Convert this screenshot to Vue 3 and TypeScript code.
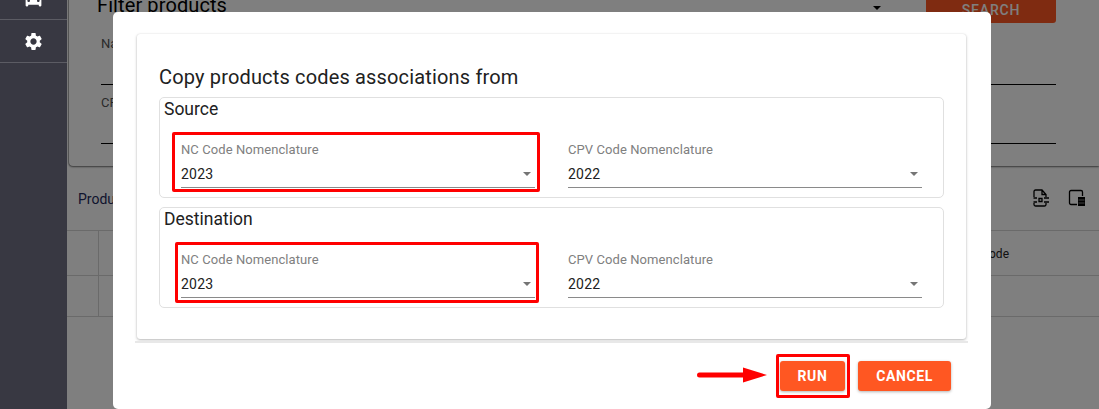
<script setup lang="ts">
interface Field { label: string; value: string }
interface Group { title: string; fields: Field[] }
const groups: Group[] = [
  { title: 'Source', fields: [{ label: 'NC Code Nomenclature', value: '2023' }, { label: 'CPV Code Nomenclature', value: '2022' }] },
  { title: 'Destination', fields: [{ label: 'NC Code Nomenclature', value: '2023' }, { label: 'CPV Code Nomenclature', value: '2022' }] },
]
</script>

<template>
  <div class="page">
    <aside class="sidebar">
      <div class="nav-item">
        <svg viewBox="0 0 24 24" class="nav-icon"><path d="M18.92 6.01C18.72 5.42 18.16 5 17.5 5h-11c-.66 0-1.21.42-1.42 1.01L3 12v8c0 .55.45 1 1 1h1c.55 0 1-.45 1-1v-1h12v1c0 .55.45 1 1 1h1c.55 0 1-.45 1-1v-8l-2.08-5.99zM6.5 16c-.83 0-1.5-.67-1.5-1.5S5.67 13 6.5 13s1.5.67 1.5 1.5S7.33 16 6.5 16zm11 0c-.83 0-1.5-.67-1.5-1.5s.67-1.5 1.5-1.5 1.5.67 1.5 1.5-.67 1.5-1.5 1.5zM5 11l1.5-4.5h11L19 11H5z"/></svg>
      </div>
      <div class="nav-item">
        <svg viewBox="0 0 24 24" class="nav-icon"><path d="M19.14 12.94c.04-.3.06-.61.06-.94 0-.32-.02-.64-.07-.94l2.03-1.58c.18-.14.23-.41.12-.61l-1.92-3.32c-.12-.22-.37-.29-.59-.22l-2.39.96c-.5-.38-1.03-.7-1.62-.94l-.36-2.54c-.04-.24-.24-.41-.48-.41h-3.84c-.24 0-.43.17-.47.41l-.36 2.54c-.59.24-1.13.57-1.62.94l-2.39-.96c-.22-.08-.47 0-.59.22L2.74 8.87c-.12.21-.08.47.12.61l2.03 1.58c-.05.3-.09.63-.09.94s.02.64.07.94l-2.03 1.58c-.18.14-.23.41-.12.61l1.92 3.32c.12.22.37.29.59.22l2.39-.96c.5.38 1.03.7 1.62.94l.36 2.54c.05.24.24.41.48.41h3.84c.24 0 .44-.17.47-.41l.36-2.54c.59-.24 1.13-.56 1.62-.94l2.39.96c.22.08.47 0 .59-.22l1.92-3.32c.12-.22.07-.47-.12-.61l-2.01-1.58zM12 15.6c-1.98 0-3.6-1.62-3.6-3.6s1.62-3.6 3.6-3.6 3.6 1.62 3.6 3.6-1.62 3.6-3.6 3.6z"/></svg>
      </div>
    </aside>

    <main class="main">
      <section class="filter-card">
        <div class="filter-head">
          <h2 class="filter-title">Filter products</h2>
          <div class="filter-actions">
            <span class="caret dark"></span>
            <button class="search-btn">SEARCH</button>
          </div>
        </div>
        <div class="filter-field"><span class="filter-label">Name</span></div>
        <div class="filter-field second"><span class="filter-label">CPV</span></div>
      </section>

      <div class="toolbar">
        <span class="toolbar-title">Products</span>
        <div class="toolbar-icons">
          <svg viewBox="0 0 18 18" class="tool-icon">
            <path d="M2 8V2.500A1.500 1.500 0 0 1 3.500 1h6.500l4 4.500V8M10 1v4.500h4M2 14v1.500A1.500 1.500 0 0 0 3.500 17h9a1.500 1.500 0 0 0 1.500-1.500V14" />
            <path d="M1.500 9h3.500M1.500 13h3.500M7 9.500h3v3H7zM12 9h5M12 13h5" />
          </svg>
          <svg viewBox="0 0 18 18" class="tool-icon">
            <path d="M9 15.500H3a1.500 1.500 0 0 1-1.500-1.500V3A1.500 1.500 0 0 1 3 1.500h10A1.500 1.500 0 0 1 14.500 3v4" />
            <path class="solid" d="M10 8h7v9h-7z" />
            <path class="cut" d="M10.500 11h6M10.500 14h6" />
          </svg>
        </div>
      </div>

      <div class="table">
        <div class="cell-narrow"></div>
        <div class="cell-head">Code</div>
        <div class="cell-narrow"></div>
        <div class="cell-body"></div>
      </div>
    </main>

    <div class="overlay">
      <div class="dialog">
        <div class="dialog-card">
          <h3 class="dialog-title">Copy products codes associations from</h3>
          <fieldset v-for="group in groups" :key="group.title" class="group">
            <div class="group-title">{{ group.title }}</div>
            <div class="group-fields">
              <div v-for="field in group.fields" :key="field.label" class="select">
                <div class="select-label">{{ field.label }}</div>
                <div class="select-value">
                  <span>{{ field.value }}</span>
                  <span class="caret"></span>
                </div>
              </div>
            </div>
          </fieldset>
        </div>
        <div class="dialog-sep"></div>
        <div class="dialog-actions">
          <button class="action">RUN</button>
          <button class="action">CANCEL</button>
        </div>

        <div class="mark mark-source"></div>
        <div class="mark mark-dest"></div>
        <div class="mark mark-run"></div>
        <svg class="arrow" viewBox="0 0 70 16">
          <line x1="2.500" y1="8" x2="48" y2="8" stroke="#f00" stroke-width="5" stroke-linecap="round" />
          <path d="M46 0.500L70 8L46 15.500z" fill="#f00" />
        </svg>
      </div>
    </div>
  </div>
</template>

<style>
html, body { margin: 0; overflow: hidden; background: #fff; }
</style>

<style scoped>
.page {
  position: relative;
  display: flex;
  width: 1099px;
  height: 409px;
  overflow: hidden;
  font-family: Roboto, "Liberation Sans", sans-serif;
  color: #000;
}
.sidebar {
  position: relative;
  z-index: 2;
  flex: 0 0 67px;
  margin-top: -23px;
  background: #383842;
}
.nav-item {
  display: flex;
  align-items: center;
  justify-content: center;
  height: 42px;
  border-bottom: 1px solid #5c5c64;
}
.nav-icon { width: 21px; height: 21px; fill: #fff; }
.main {
  flex: 1;
  min-width: 0;
  margin-top: -7px;
}
.filter-card {
  margin-left: 2px;
  padding: 0 43px 22px 32px;
  border-radius: 0 0 0 4px;
  background: #fff;
  box-shadow: 0 1px 2px rgba(0, 0, 0, .55), -1px 0 1px rgba(0, 0, 0, .25);
}
.filter-head {
  display: flex;
  justify-content: space-between;
  height: 30px;
  margin-left: -4px;
}
.filter-title {
  margin: 0;
  font-size: 20px;
  font-weight: 400;
  line-height: 24px;
  letter-spacing: .1px;
}
.filter-actions { display: flex; align-items: flex-start; gap: 44px; }
.caret {
  width: 0;
  height: 0;
  margin-right: 1px;
  border-left: 4.500px solid transparent;
  border-right: 4.500px solid transparent;
  border-top: 4px solid #757575;
}
.caret.dark { margin-top: 13px; border-top-color: #000; }
.search-btn {
  width: 130px;
  height: 30px;
  padding: 3px 0 0;
  border: 0;
  border-radius: 0 0 3px 3px;
  background: #ff5722;
  color: #fff;
  font: 500 14px Roboto, sans-serif;
  letter-spacing: .8px;
}
.filter-field {
  height: 62px;
  box-sizing: border-box;
  padding-top: 14px;
  border-bottom: 1px solid #000;
}
.filter-field.second { height: 59px; padding-top: 11px; }
.filter-label { display: block; font-size: 13px; line-height: 14px; color: #555; }
.toolbar {
  display: flex;
  align-items: center;
  justify-content: space-between;
  height: 64px;
  padding: 2px 13px 1px 11px;
  box-sizing: border-box;
}
.toolbar-title { font-size: 14px; color: #1e2a5c; }
.toolbar-icons { display: flex; gap: 18px; margin-top: -1px; }
.tool-icon {
  width: 18px;
  height: 18px;
  fill: none;
  stroke: #000;
  stroke-width: 1.300;
}
.tool-icon .solid { fill: #000; stroke: none; }
.tool-icon .cut { stroke: #808080; stroke-width: 1; }
.table {
  display: grid;
  grid-template-columns: 32px 1fr;
  grid-template-rows: 45px 41px;
  border-top: 1px solid #d4d4d4;
  color: #222;
}
.table > div { border-bottom: 1px solid #d4d4d4; }
.cell-narrow { border-right: 1px solid #d4d4d4; }
.cell-head {
  padding-right: 90px;
  text-align: right;
  font-size: 12px;
  line-height: 46px;
}
.overlay {
  position: absolute;
  inset: 0;
  background: rgba(0, 0, 0, .5);
}
.dialog {
  position: absolute;
  left: 113px;
  top: 12px;
  width: 878px;
  height: 397px;
  box-sizing: border-box;
  padding: 22px 25px 0 24px;
  border-radius: 5px;
  background: #fff;
}
.dialog-card {
  height: 305px;
  box-sizing: border-box;
  padding: 31px 22px 31px;
  border-radius: 3px;
  background: #fff;
  box-shadow: 0 1px 3px rgba(0, 0, 0, .28), 0 0 1px rgba(0, 0, 0, .12);
}
.dialog-title {
  margin: 0 0 8px;
  font-size: 20px;
  font-weight: 400;
  line-height: 24px;
  letter-spacing: .16px;
  color: #212121;
}
.group {
  margin: 0 0 9px;
  padding: 1px 21px 9px 4px;
  border: 1px solid #e0e0e0;
  border-radius: 5px;
  min-width: 0;
}
.group:last-child { margin-bottom: 0; }
.group-title {
  font-size: 17.500px;
  line-height: 20px;
  color: #212121;
}
.group-fields {
  display: grid;
  grid-template-columns: 1fr 1fr;
  column-gap: 33px;
  margin-top: 23px;
  margin-left: 17px;
}
.select-label {
  margin-bottom: 8px;
  padding-top: 1px;
  font-size: 13px;
  line-height: 14px;
  letter-spacing: .08px;
  color: #808080;
}
.select-value {
  display: flex;
  align-items: center;
  justify-content: space-between;
  height: 23px;
  box-sizing: border-box;
  padding: 0 3px 5px 0;
  border-bottom: 1px solid #8a8a8a;
  font-size: 14px;
  letter-spacing: .2px;
  color: #212121;
}
.dialog-sep {
  height: 2px;
  margin: 2px -2px 0;
  background: #e8e8e8;
}
.dialog-actions {
  display: flex;
  justify-content: flex-end;
  gap: 13px;
  margin: 18px 15px 0 0;
}
.action {
  width: 93px;
  height: 30px;
  padding: 0;
  border: 0;
  border-radius: 3px;
  background: #ff5722;
  color: #fff;
  font: 700 14px Roboto, sans-serif;
  letter-spacing: .6px;
  box-shadow: 0 1px 3px rgba(0, 0, 0, .3);
}
.action:first-child { width: 65px; }
.mark {
  position: absolute;
  box-sizing: border-box;
  border: 3px solid #f00;
  border-radius: 2px;
}
.mark-source { left: 59px; top: 120px; width: 368px; height: 60px; }
.mark-dest { left: 62px; top: 230px; width: 364px; height: 61px; }
.mark-run { left: 663px; top: 342px; width: 74px; height: 44px; }
.arrow {
  position: absolute;
  left: 584px;
  top: 355px;
  width: 70px;
  height: 16px;
}
</style>
